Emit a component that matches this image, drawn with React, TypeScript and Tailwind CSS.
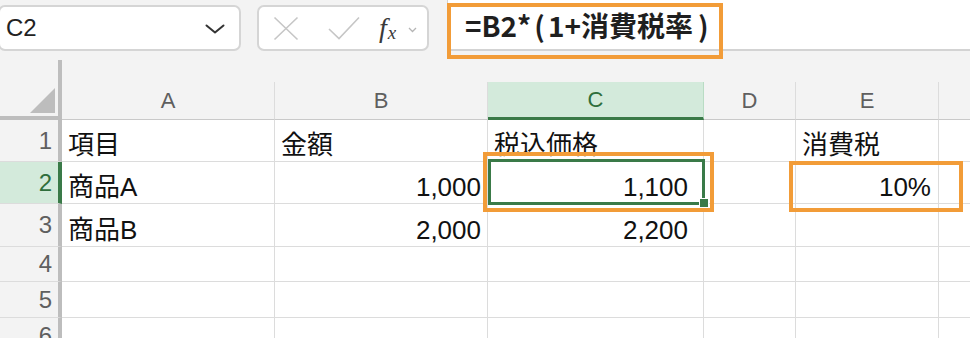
const cellFont = { fontFamily: '"Liberation Sans", "Noto Sans CJK JP", sans-serif' };

const cols = [
  { key: 'A', w: 'w-[213px]' },
  { key: 'B', w: 'w-[213px]' },
  { key: 'C', w: 'w-[216px]' },
  { key: 'D', w: 'w-[92px]' },
  { key: 'E', w: 'w-[143px]' },
  { key: '', w: 'w-[80px]' },
];

type Cell = { text?: string; right?: boolean; pr?: string };

const rows: { n: number; h: string; cells: Cell[] }[] = [
  { n: 1, h: 'h-[42px]', cells: [{ text: '項目' }, { text: '金額' }, { text: '税込価格' }, {}, { text: '消費税' }, {}] },
  {
    n: 2,
    h: 'h-[42px]',
    cells: [{ text: '商品A' }, { text: '1,000', right: true, pr: 'pr-[6px]' }, { text: '1,100', right: true, pr: 'pr-[15px]' }, {}, { text: '10%', right: true, pr: 'pr-[7px]' }, {}],
  },
  {
    n: 3,
    h: 'h-[43px]',
    cells: [{ text: '商品B' }, { text: '2,000', right: true, pr: 'pr-[6px]' }, { text: '2,200', right: true, pr: 'pr-[15px]' }, {}, {}, {}],
  },
  { n: 4, h: 'h-[35px]', cells: [{}, {}, {}, {}, {}, {}] },
  { n: 5, h: 'h-[36px]', cells: [{}, {}, {}, {}, {}, {}] },
  { n: 6, h: 'h-[36px]', cells: [{}, {}, {}, {}, {}, {}] },
];

function Toolbar() {
  return (
    <div className="flex h-[60px] items-start">
      {/* name box */}
      <div className="ml-[-2px] mt-[5px] flex h-[46px] w-[243px] items-center justify-between rounded-[7px] border-2 border-[#d5d5d5] bg-white pl-[6px] pr-[14px]">
        <span className="text-[24px] leading-none text-[#222]">C2</span>
        <svg width="20" height="10" viewBox="0 0 20 10" className="mt-[1px]">
          <path d="M1.5 1.5 L10 8.5 L18.5 1.5" fill="none" stroke="#333" strokeWidth="2" strokeLinecap="round" strokeLinejoin="round" />
        </svg>
      </div>
      {/* cancel / enter / fx */}
      <div className="ml-[16px] mt-[5px] flex h-[46px] w-[172px] items-center rounded-[7px] border-2 border-[#d5d5d5] bg-white pl-[14px]">
        <svg width="26" height="25" viewBox="0 0 26 25">
          <path d="M1.5 1.5 L24.5 23.5 M24.5 1.5 L1.5 23.5" stroke="#c6c6c6" strokeWidth="1.6" fill="none" />
        </svg>
        <svg width="34" height="24" viewBox="0 0 34 24" className="ml-[27px]">
          <path d="M3 13 L13 22.5 L33 1.5" stroke="#c6c6c6" strokeWidth="1.6" fill="none" />
        </svg>
        <span className="ml-[19px] flex items-baseline text-[#3a3a3a]" style={{ fontFamily: '"Liberation Serif", serif' }}>
          <span className="text-[28px] italic leading-none">f</span>
          <span className="ml-[1px] translate-y-[2px] text-[19px] italic leading-none">x</span>
        </span>
        <svg width="9" height="6" viewBox="0 0 9 6" className="ml-[12px] mt-[4px]">
          <path d="M1 1 L4.5 4.5 L8 1" stroke="#b5b5b5" strokeWidth="1.3" fill="none" />
        </svg>
      </div>
      {/* formula bar */}
      <div className="ml-[18px] flex h-[51px] flex-1 items-center border-b-2 border-l border-[#d3d3d3] bg-white pl-[17px]">
        <span
          className="text-[28px] font-bold leading-none text-[#1f1f1f]"
          style={{ fontFamily: '"Noto Sans CJK JP", sans-serif' }}
        >
          =B2*<span className="mx-[3px]">(</span>1+消費税率<span className="ml-[5px]">)</span>
        </span>
      </div>
    </div>
  );
}

function HeaderRow() {
  return (
    <div className="flex h-[60px]">
      <div className="relative w-[62px] shrink-0 border-b-4 border-r-4 border-[#bdbdbd] bg-[#f3f3f3]">
        <svg width="25" height="25" viewBox="0 0 25 25" className="absolute left-[30px] top-[28px]">
          <path d="M25 0 L25 25 L0 25 Z" fill="#bdbdbd" />
        </svg>
      </div>
      {cols.map((c, i) => {
        const active = c.key === 'C';
        return (
          <div key={i} className={`${c.w} flex shrink-0 flex-col`}>
            <div className="h-[22px]" />
            <div
              className={`flex flex-1 items-center justify-center border-r text-[22px] leading-none ${
                active
                  ? 'border-b-[3px] border-r-[#b9dcc4] border-b-[#3a7a48] bg-[#d3eadb] text-[#2f6e3c]'
                  : 'border-b border-r-[#dcdcdc] border-b-[#c9c9c9] text-[#5f5f5f]'
              }`}
            >
              {c.key}
            </div>
          </div>
        );
      })}
    </div>
  );
}

function BodyRow({ n, h, cells }: { n: number; h: string; cells: Cell[] }) {
  const active = n === 2;
  return (
    <div className={`flex ${h}`}>
      <div
        className={`flex w-[62px] shrink-0 items-center justify-end border-b border-r-4 border-b-[#dcdcdc] pr-[6px] text-[24px] leading-none ${
          active ? 'border-r-[#3a7a48] bg-[#d3eadb] text-[#2f6e3c]' : 'border-r-[#bdbdbd] bg-[#f3f3f3] text-[#5f5f5f]'
        }`}
      >
        {n}
      </div>
      {cells.map((cell, i) => (
        <div
          key={i}
          className={`${cols[i].w} flex shrink-0 items-end border-b border-r border-[#dcdcdc] bg-white pb-[3px] text-[26px] leading-none text-[#111] ${
            cell.right ? `justify-end ${cell.pr}` : 'pl-[6px]'
          }`}
        >
          {cell.text}
        </div>
      ))}
    </div>
  );
}

export default function App() {
  return (
    <div className="relative h-[338px] w-[970px] overflow-hidden bg-[#f3f3f3]" style={cellFont}>
      <Toolbar />
      <HeaderRow />
      {rows.map((r) => (
        <BodyRow key={r.n} {...r} />
      ))}

      {/* active cell */}
      <div className="absolute left-[488px] top-[159px] h-[46px] w-[217px] border-[3px] border-[#3a7a48]" />
      <div className="absolute left-[699px] top-[198px] h-[10px] w-[10px] border border-white bg-[#3a7a48]" />

      {/* orange callouts */}
      <div className="absolute left-[447px] top-[3px] h-[56px] w-[276px] border-4 border-[#f29c38]" />
      <div className="absolute left-[483px] top-[152px] h-[60px] w-[231px] border-4 border-[#f29c38]" />
      <div className="absolute left-[789px] top-[161px] h-[51px] w-[174px] border-4 border-[#f29c38]" />
    </div>
  );
}
